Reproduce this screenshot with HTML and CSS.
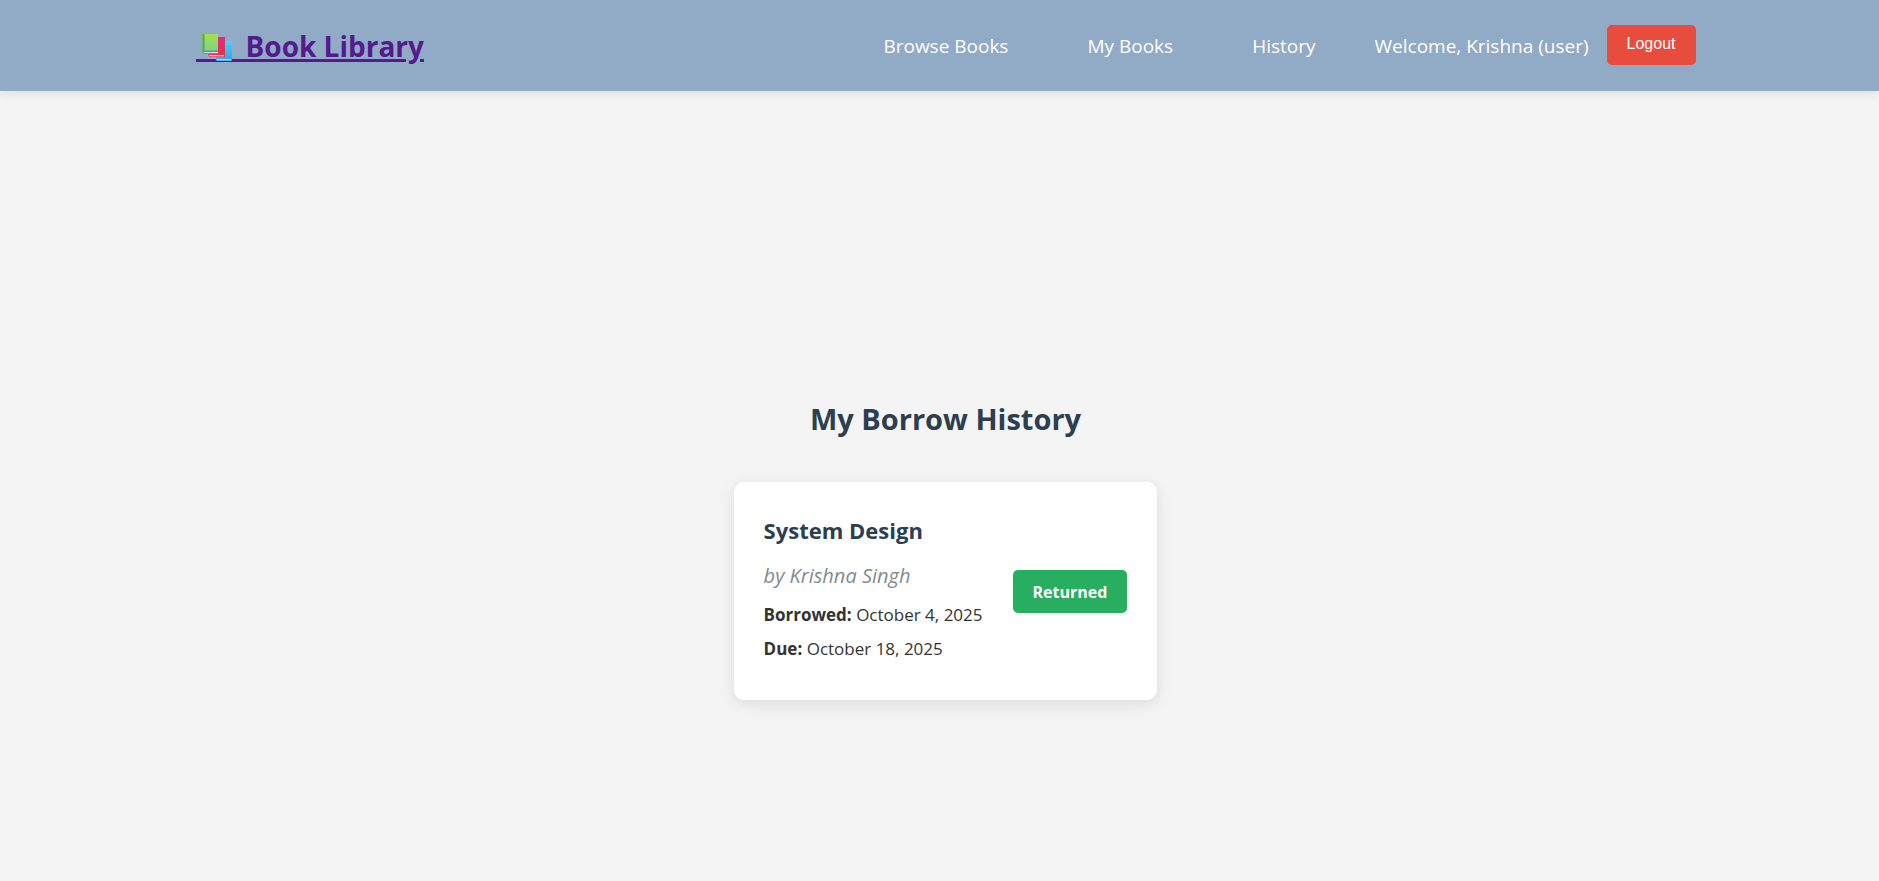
FILE: index.html
```
<!DOCTYPE html>
<html lang="en">
<head>
<meta charset="utf-8">
<title>Book Library</title>
<link rel="stylesheet" href="styles.css">
</head>
<body>
<header class="header">
  <div class="container">
    <a class="logo" href="#"><svg class="logo-icon" width="50" height="44" viewBox="0 0 50 44" aria-hidden="true">
        <defs>
          <linearGradient id="green" x1="0" y1="0" x2="0" y2="1"><stop offset="0" stop-color="#a6e04c"/><stop offset="1" stop-color="#6fd296"/></linearGradient>
          <linearGradient id="red" x1="0" y1="0" x2="0" y2="1"><stop offset="0" stop-color="#e02c78"/><stop offset="1" stop-color="#e8334a"/></linearGradient>
          <linearGradient id="blue" x1="0" y1="0" x2="0" y2="1"><stop offset="0" stop-color="#50d0fa"/><stop offset="1" stop-color="#2d9fee"/></linearGradient>
        </defs>
        <rect x="0" y="35" width="50" height="3" fill="#551a8b"/>
        <path d="M21 17h15v20H21q-2-1-1-3z" fill="url(#blue)"/>
        <path d="M20 35h15v1.200H21z" fill="#dcd3f3"/>
        <path d="M14 13h15v20H14q-3-1-1-3z" fill="url(#red)"/>
        <path d="M13 31h15v1.200H14z" fill="#f5dce8"/>
        <path d="M6.500 10h15.500v20H8q-1.500-1-1.500-2z" fill="url(#green)"/>
        <path d="M6.500 10h2v17h-2z" fill="#4cab56"/>
        <path d="M6.500 26.500H22V30H8q-1.500-1-1.500-2z" fill="#5b9b7e"/>
        <path d="M7.500 28H22v1H8z" fill="#ded9ee"/>
      </svg><span class="logo-text">Book Library</span></a>
    <nav class="nav">
      <a class="nav-link" href="#">Browse Books</a>
      <a class="nav-link" href="#">My Books</a>
      <a class="nav-link" href="#">History</a>
    </nav>
    <div class="user">
      <span>Welcome, Krishna (user)</span>
      <button class="logout" type="button">Logout</button>
    </div>
  </div>
</header>
<main class="main">
  <h1 class="title">My Borrow History</h1>
  <article class="card">
    <div class="details">
      <h2 class="book">System Design</h2>
      <p class="author">by Krishna Singh</p>
      <p class="date"><strong>Borrowed:</strong> October 4, 2025</p>
      <p class="date"><strong>Due:</strong> October 18, 2025</p>
    </div>
    <span class="status">Returned</span>
  </article>
</main>
</body>
</html>
```
FILE: styles.css
```
* { box-sizing: border-box; margin: 0; }
body {
  min-height: 100vh;
  background: #f4f4f4;
  color: #333;
  font: 17px/26px "Segoe UI", "Open Sans", "Noto Sans", sans-serif;
}
.header {
  padding: 20px 0 20px 12px;
  background: #91aac6;
  box-shadow: 0 2px 10px rgba(0, 0, 0, 0.1);
  color: #fff;
}
.container {
  display: flex;
  align-items: center;
  max-width: 1500px;
  min-height: 51px;
  margin: 0 auto;
}
.logo {
  display: flex;
  align-items: center;
  margin-right: auto;
  color: #551a8b;
  font-size: 28px;
  font-weight: 700;
  line-height: 44px;
  text-decoration: none;
}
.logo-text {
  text-decoration: underline;
  text-decoration-thickness: 3px;
}
.nav { display: flex; gap: 79px; margin-right: 59px; font-size: 19px; }
.nav-link { color: #fff; text-decoration: none; }
.user { display: flex; align-items: center; gap: 18px; font-size: 19px; }
.logout {
  margin-bottom: 2px;
  padding: 8px 20px 10px;
  border: 0;
  border-radius: 5px;
  background: #e74c3c;
  color: #fff;
  font: 16px/22px "Liberation Sans", Arial, sans-serif;
}
.main {
  display: flex;
  flex-direction: column;
  align-items: center;
  padding: 304px 0 32px 12px;
}
.title { margin-bottom: 39px; color: #2c3e50; font-size: 29px; line-height: 48px; }
.card {
  display: flex;
  align-items: center;
  gap: 30px;
  min-height: 218px;
  padding: 30px;
  border-radius: 10px;
  background: #fff;
  box-shadow: 0 4px 15px rgba(0, 0, 0, 0.1);
}
.book { margin-bottom: 12px; color: #2c3e50; font-size: 22px; line-height: 36px; }
.author { margin-bottom: 10px; color: #7f8c8d; font-size: 20px; font-style: italic; line-height: 32px; }
.date { margin-bottom: 8px; }
.status {
  padding: 9px 20px 8px;
  border-radius: 5px;
  background: #27ae60;
  color: #fff;
  font-size: 16px;
  font-weight: 700;
}
```
